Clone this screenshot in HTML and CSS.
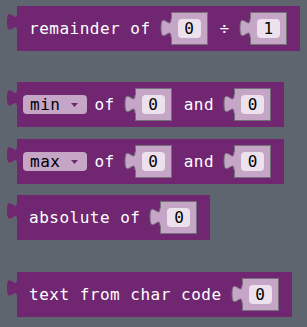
FILE: index.html
```html
<!DOCTYPE html>
<html>
<head>
<meta charset="utf-8">
<link rel="stylesheet" href="styles.css">
</head>
<body>
<div class="ws">
  <div class="block first">
    <svg class="tab" width="10" height="18" viewBox="0 0 10 18"><path d="M10,0 C10,12 0,-9 0,9 S10,6 10,18 Z"/></svg>
    <span class="txt">remainder of</span>
    <span class="slot">
      <svg class="nub" width="11" height="18" viewBox="0 0 11 18"><path class="nf" d="M11,0 L10,0 C10,12 0,-9 0,9 S10,6 10,18 L11,18 Z"/><path class="ns" d="M10,0 C10,12 0,-9 0,9 S10,6 10,18"/></svg>
      <span class="box"><span class="field">0</span></span>
    </span>
    <span class="txt after">÷</span>
    <span class="slot">
      <svg class="nub" width="11" height="18" viewBox="0 0 11 18"><path class="nf" d="M11,0 L10,0 C10,12 0,-9 0,9 S10,6 10,18 L11,18 Z"/><path class="ns" d="M10,0 C10,12 0,-9 0,9 S10,6 10,18"/></svg>
      <span class="box"><span class="field">1</span></span>
    </span>
  </div>

  <div class="block drop sep">
    <svg class="tab" width="10" height="18" viewBox="0 0 10 18"><path d="M10,0 C10,12 0,-9 0,9 S10,6 10,18 Z"/></svg>
    <span class="dd"><span class="ddt">min</span><svg class="arrow" width="7" height="4" viewBox="0 0 7 4"><path d="M0,0 L7,0 L3.5,4 Z"/></svg></span>
    <span class="txt">of</span>
    <span class="slot">
      <svg class="nub" width="11" height="18" viewBox="0 0 11 18"><path class="nf" d="M11,0 L10,0 C10,12 0,-9 0,9 S10,6 10,18 L11,18 Z"/><path class="ns" d="M10,0 C10,12 0,-9 0,9 S10,6 10,18"/></svg>
      <span class="box"><span class="field">0</span></span>
    </span>
    <span class="txt after">and</span>
    <span class="slot">
      <svg class="nub" width="11" height="18" viewBox="0 0 11 18"><path class="nf" d="M11,0 L10,0 C10,12 0,-9 0,9 S10,6 10,18 L11,18 Z"/><path class="ns" d="M10,0 C10,12 0,-9 0,9 S10,6 10,18"/></svg>
      <span class="box"><span class="field">0</span></span>
    </span>
  </div>

  <div class="block drop b3">
    <svg class="tab" width="10" height="18" viewBox="0 0 10 18"><path d="M10,0 C10,12 0,-9 0,9 S10,6 10,18 Z"/></svg>
    <span class="dd"><span class="ddt">max</span><svg class="arrow" width="7" height="4" viewBox="0 0 7 4"><path d="M0,0 L7,0 L3.5,4 Z"/></svg></span>
    <span class="txt">of</span>
    <span class="slot">
      <svg class="nub" width="11" height="18" viewBox="0 0 11 18"><path class="nf" d="M11,0 L10,0 C10,12 0,-9 0,9 S10,6 10,18 L11,18 Z"/><path class="ns" d="M10,0 C10,12 0,-9 0,9 S10,6 10,18"/></svg>
      <span class="box"><span class="field">0</span></span>
    </span>
    <span class="txt after">and</span>
    <span class="slot">
      <svg class="nub" width="11" height="18" viewBox="0 0 11 18"><path class="nf" d="M11,0 L10,0 C10,12 0,-9 0,9 S10,6 10,18 L11,18 Z"/><path class="ns" d="M10,0 C10,12 0,-9 0,9 S10,6 10,18"/></svg>
      <span class="box"><span class="field">0</span></span>
    </span>
  </div>

  <div class="block b4">
    <svg class="tab" width="10" height="18" viewBox="0 0 10 18"><path d="M10,0 C10,12 0,-9 0,9 S10,6 10,18 Z"/></svg>
    <span class="txt">absolute of</span>
    <span class="slot">
      <svg class="nub" width="11" height="18" viewBox="0 0 11 18"><path class="nf" d="M11,0 L10,0 C10,12 0,-9 0,9 S10,6 10,18 L11,18 Z"/><path class="ns" d="M10,0 C10,12 0,-9 0,9 S10,6 10,18"/></svg>
      <span class="box"><span class="field">0</span></span>
    </span>
  </div>

  <div class="block sep b5">
    <svg class="tab" width="10" height="18" viewBox="0 0 10 18"><path d="M10,0 C10,12 0,-9 0,9 S10,6 10,18 Z"/></svg>
    <span class="txt">text from char code</span>
    <span class="slot">
      <svg class="nub" width="11" height="18" viewBox="0 0 11 18"><path class="nf" d="M11,0 L10,0 C10,12 0,-9 0,9 S10,6 10,18 L11,18 Z"/><path class="ns" d="M10,0 C10,12 0,-9 0,9 S10,6 10,18"/></svg>
      <span class="box"><span class="field">0</span></span>
    </span>
  </div>
</div>
</body>
</html>
```

FILE: styles.css
```css
html, body {
  margin: 0;
  padding: 0;
  background: #5f656f;
  width: 307px;
  height: 327px;
  overflow: hidden;
}

.ws {
  display: flex;
  flex-direction: column;
  align-items: flex-start;
  padding: 6px 0 0 17px;
  font-family: "DejaVu Sans Mono", "Liberation Mono", monospace;
  font-size: 16px;
  letter-spacing: 0.5px;
}

.block {
  position: relative;
  display: flex;
  align-items: center;
  gap: 10px;
  height: 45px;
  padding: 0 13px 0 12px;
  background: #712672;
  color: #ffffff;
}

.block.drop {
  padding-left: 6px;
}

.sep { margin-top: 31px; }
.b3 { margin-top: 12px; }
.b4 { margin-top: 11px; }
.b5 { margin-top: 32px; }

.tab {
  position: absolute;
  left: -10px;
  top: 7px;
  overflow: visible;
}
.tab path { fill: #712672; }

.txt {
  white-space: pre;
  line-height: 19px;
}
.txt.after { margin-left: 2px; }

.slot {
  display: flex;
  align-items: flex-start;
}

.nub {
  position: relative;
  z-index: 1;
  margin-top: 7px;
  margin-right: -1px;
  overflow: visible;
}
.nub .nf { fill: #c6a6c7; }
.nub .ns { fill: none; stroke: #74707a; stroke-width: 1; }

.box {
  display: flex;
  padding: 6px;
  border: 1px solid #74707a;
  background: #c6a6c7;
}

.field {
  display: flex;
  align-items: center;
  justify-content: center;
  width: 23px;
  height: 19px;
  border-radius: 4px;
  background: #ece1ec;
  color: #000000;
  letter-spacing: 0;
  line-height: 19px;
}

.dd {
  display: flex;
  align-items: center;
  gap: 11px;
  height: 19px;
  padding: 0 9px 0 7px;
  margin-right: -3px;
  border-radius: 4px;
  background: #c6a6c7;
  color: #000000;
}
.ddt { line-height: 19px; }
.arrow path { fill: #712672; }
```
